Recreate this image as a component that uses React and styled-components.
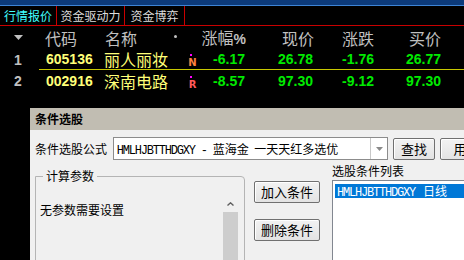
import React from 'react';
import styled, { createGlobalStyle } from 'styled-components';

const CJK = '"Noto Sans CJK SC", "Noto Sans", sans-serif';
const NUM = '"Liberation Sans", Arial, sans-serif';

const GlobalStyle = createGlobalStyle`
  html, body {
    margin: 0;
    padding: 0;
    background: #000;
  }
`;

const Screen = styled.div`
  position: relative;
  width: 464px;
  height: 260px;
  overflow: hidden;
  background: #000;
  font-family: ${CJK};
`;

const TopStrip = styled.div`
  height: 5px;
  background: #0c3a7a;
  border-bottom: 1px solid #3d84d6;
`;

const TabBar = styled.div`
  display: flex;
  height: 19px;
  border-bottom: 1px solid #c80000;
`;

const Tab = styled.div`
  width: ${p => p.$width}px;
  border-right: 1px solid #c80000;
  color: ${p => (p.$active ? '#40ffff' : '#dcdcdc')};
  font-size: 12px;
  line-height: 19px;
  text-align: center;
  white-space: nowrap;
`;

const Grid = styled.div`
  display: grid;
  grid-template-columns: 39px 64px 67px 30px 46px 68px 60px 67px 1fr;
  height: ${p => p.$height}px;
  align-items: center;

  ${p => p.$divider && `
    & > *:not(:first-child) {
      height: 100%;
      border-bottom: 1px solid #c8c800;
      box-sizing: border-box;
    }
  `}
`;

const Cell = styled.div`
  display: flex;
  align-items: center;
  height: 100%;
  justify-content: ${p => (p.$align === 'right' ? 'flex-end' : p.$align === 'center' ? 'center' : 'flex-start')};
  padding-left: ${p => p.$pl || 0}px;
  padding-right: ${p => p.$pr || 0}px;
  color: ${p => p.$color || '#c0c0c0'};
  white-space: nowrap;
  line-height: 1;
`;

const HeadText = styled.span`
  font-size: 16px;
  line-height: 16px;
  color: #c0c0c0;
`;

const Percent = styled.span`
  font-family: ${NUM};
  font-weight: bold;
  font-size: 14px;
`;

const Num = styled.span`
  font-family: ${NUM};
  font-weight: bold;
  font-size: 14px;
  line-height: 14px;
`;

const Name = styled.span`
  font-size: 16px;
  line-height: 16px;
  color: #ffff78;
`;

const HeadDot = styled.span`
  width: 3px;
  height: 3px;
  border-radius: 50%;
  background: #c0c0c0;
  margin-top: -2px;
`;

const Marker = styled.div`
  display: flex;
  flex-direction: column;
  align-items: center;
  width: 9px;
  margin-top: 2px;
`;

const MarkerDot = styled.span`
  width: 2px;
  height: 2px;
  background: #ff00ff;
  margin-right: 3px;
`;

const MarkerLetter = styled.span`
  font-family: "DejaVu Sans", sans-serif;
  font-weight: bold;
  font-size: 10px;
  line-height: 9px;
  margin-top: 2px;
  color: ${p => p.$color};
`;

const Dialog = styled.div`
  position: absolute;
  left: 30px;
  top: 108px;
  width: 450px;
  height: 170px;
  background: #f0f0f0;
  display: flex;
  flex-direction: column;
  font-size: 12px;
  color: #000;
`;

const TitleBar = styled.div`
  height: 22px;
  line-height: 22px;
  background: #c1bdb2;
  padding-left: 5px;
  font-weight: bold;
  font-size: 12px;
`;

const FormulaRow = styled.div`
  display: flex;
  align-items: center;
  margin-top: 7px;
  padding-left: 5px;
  height: 23px;
`;

const Label = styled.span`
  width: ${p => p.$width || 'auto'};
  font-size: 12px;
  line-height: 14px;
  white-space: nowrap;
`;

const Select = styled.div`
  display: flex;
  width: 283px;
  height: 23px;
  box-sizing: border-box;
  border: 1px solid #8c8c8c;
  background: #fff;
`;

const SelectText = styled.div`
  flex: 1;
  padding-left: 3px;
  line-height: 21px;
  white-space: nowrap;
  overflow: hidden;
`;

const Mono = styled.span`
  font-family: "Liberation Mono", monospace;
  font-size: 12px;
  letter-spacing: -1.2px;
`;

const DropArrow = styled.div`
  width: 16px;
  border-left: 1px solid #c8c8c8;
  display: flex;
  align-items: center;
  justify-content: center;
`;

const Button = styled.div`
  width: ${p => p.$width}px;
  height: 22px;
  box-sizing: border-box;
  margin-left: ${p => p.$ml || 0}px;
  border: 1px solid #707070;
  border-radius: 2px;
  background: linear-gradient(#f2f2f2, #e3e3e3);
  box-shadow: inset 1px 1px 0 #fff;
  font-size: 13px;
  line-height: 20px;
  text-align: center;
  white-space: nowrap;
  overflow: hidden;
  flex-shrink: 0;
`;

const Lower = styled.div`
  display: flex;
  align-items: flex-start;
  margin-top: 4px;
  padding-left: 5px;
`;

const GroupBox = styled.fieldset`
  width: 210px;
  height: 110px;
  box-sizing: border-box;
  margin: 6px 0 0 0;
  padding: 0;
  border: 1px solid #b4b4b4;
  border-radius: 0 4px 0 0;
  display: flex;
`;

const Legend = styled.legend`
  margin-left: 7px;
  padding: 0 3px;
  font-size: 12px;
  line-height: 12px;
`;

const GroupContent = styled.div`
  display: flex;
  flex: 1;
  height: 100%;
`;

const ParamText = styled.div`
  flex: 1;
  padding: 21px 0 0 4px;
  font-size: 12px;
  line-height: 14px;
`;

const ScrollBar = styled.div`
  width: 15px;
  margin: 13px 6px 0 0;
  display: flex;
  flex-direction: column;
  height: 120px;
  background: #cdcdcd;
`;

const ScrollUp = styled.div`
  height: 17px;
  background: #f0f0f0;
  display: flex;
  align-items: center;
  justify-content: center;
`;

const ButtonColumn = styled.div`
  display: flex;
  flex-direction: column;
  gap: 16px;
  margin: 17px 0 0 9px;
`;

const ListColumn = styled.div`
  display: flex;
  flex-direction: column;
  margin-left: 12px;
`;

const ListBox = styled.div`
  margin-top: 2px;
  width: 140px;
  height: 100px;
  box-sizing: border-box;
  background: #fff;
  border: 1px solid #828790;
  padding: 3px 0 0 2px;
`;

const ListItem = styled.div`
  height: 14px;
  line-height: 14px;
  background: ${p => (p.$selected ? '#0078d7' : 'transparent')};
  color: ${p => (p.$selected ? '#fff' : '#000')};
  padding-left: 2px;
  white-space: nowrap;
`;

const columns = [
  { key: 'code', label: '代码', pl: 6 },
  { key: 'name', label: '名称', pl: 2 },
];

const stocks = [
  { idx: 1, code: '605136', name: '丽人丽妆', mark: 'N', markColor: '#ff8040', pct: '-6.17', price: '26.78', chg: '-1.76', bid: '26.77' },
  { idx: 2, code: '002916', name: '深南电路', mark: 'R', markColor: '#ff5a5a', pct: '-8.57', price: '97.30', chg: '-9.12', bid: '97.30' },
];

const GREEN = '#00ea00';

function SortArrow() {
  return (
    <svg width="9" height="5" viewBox="0 0 9 5">
      <polygon points="0,0 9,0 4.5,5" fill="#c0c0c0" />
    </svg>
  );
}

function StockRow({ s, divider, height }) {
  return (
    <Grid $height={height} $divider={divider}>
      <Cell $align="center" $pr={3}><Num>{s.idx}</Num></Cell>
      <Cell $pl={7} $color="#ffff78"><Num>{s.code}</Num></Cell>
      <Cell $pl={1}><Name>{s.name}</Name></Cell>
      <Cell $pl={18}>
        <Marker>
          <MarkerDot />
          <MarkerLetter $color={s.markColor}>{s.mark}</MarkerLetter>
        </Marker>
      </Cell>
      <Cell $align="right" $pr={1} $color={GREEN}><Num>{s.pct}</Num></Cell>
      <Cell $align="right" $pr={1} $color={GREEN}><Num>{s.price}</Num></Cell>
      <Cell $align="right" $color={GREEN}><Num>{s.chg}</Num></Cell>
      <Cell $align="right" $color={GREEN}><Num>{s.bid}</Num></Cell>
      <Cell />
    </Grid>
  );
}

export default function App() {
  return (
    <Screen>
      <GlobalStyle />
      <TopStrip />
      <TabBar>
        <Tab $width={56} $active>行情报价</Tab>
        <Tab $width={67}>资金驱动力</Tab>
        <Tab $width={59}>资金博弈</Tab>
      </TabBar>

      <Grid $height={23}>
        <Cell $align="center" $pr={3}><SortArrow /></Cell>
        {columns.map(c => (
          <Cell key={c.key} $pl={c.pl}><HeadText>{c.label}</HeadText></Cell>
        ))}
        <Cell $pl={4}><HeadDot /></Cell>
        <Cell $align="right"><HeadText>涨幅<Percent>%</Percent></HeadText></Cell>
        <Cell $align="right"><HeadText>现价</HeadText></Cell>
        <Cell $align="right"><HeadText>涨跌</HeadText></Cell>
        <Cell $align="right"><HeadText>买价</HeadText></Cell>
        <Cell />
      </Grid>
      <StockRow s={stocks[0]} height={21} divider />
      <StockRow s={stocks[1]} height={22} />

      <Dialog>
        <TitleBar>条件选股</TitleBar>
        <FormulaRow>
          <Label $width="80px">条件选股公式</Label>
          <Select>
            <SelectText><Mono>HMLHJBTTHDGXY - </Mono>蓝海金&nbsp;&nbsp;一天天红多选优</SelectText>
            <DropArrow>
              <svg width="7" height="4" viewBox="0 0 7 4">
                <polygon points="0,0 7,0 3.5,4" fill="#8a8a8a" />
              </svg>
            </DropArrow>
          </Select>
          <Button $width={42} $ml={5}>查找</Button>
          <Button $width={40} $ml={5}>用</Button>
        </FormulaRow>
        <Lower>
          <GroupBox>
            <Legend>计算参数</Legend>
            <GroupContent>
              <ParamText>无参数需要设置</ParamText>
              <ScrollBar>
                <ScrollUp>
                  <svg width="7" height="4" viewBox="0 0 7 4">
                    <polyline points="0.5,3.5 3.5,0.8 6.5,3.5" fill="none" stroke="#606060" strokeWidth="1.4" />
                  </svg>
                </ScrollUp>
              </ScrollBar>
            </GroupContent>
          </GroupBox>
          <ButtonColumn>
            <Button $width={66}>加入条件</Button>
            <Button $width={66}>删除条件</Button>
          </ButtonColumn>
          <ListColumn>
            <Label>选股条件列表</Label>
            <ListBox>
              <ListItem $selected><Mono>HMLHJBTTHDGXY</Mono>&nbsp;&nbsp;&nbsp;日线</ListItem>
            </ListBox>
          </ListColumn>
        </Lower>
      </Dialog>
    </Screen>
  );
}
